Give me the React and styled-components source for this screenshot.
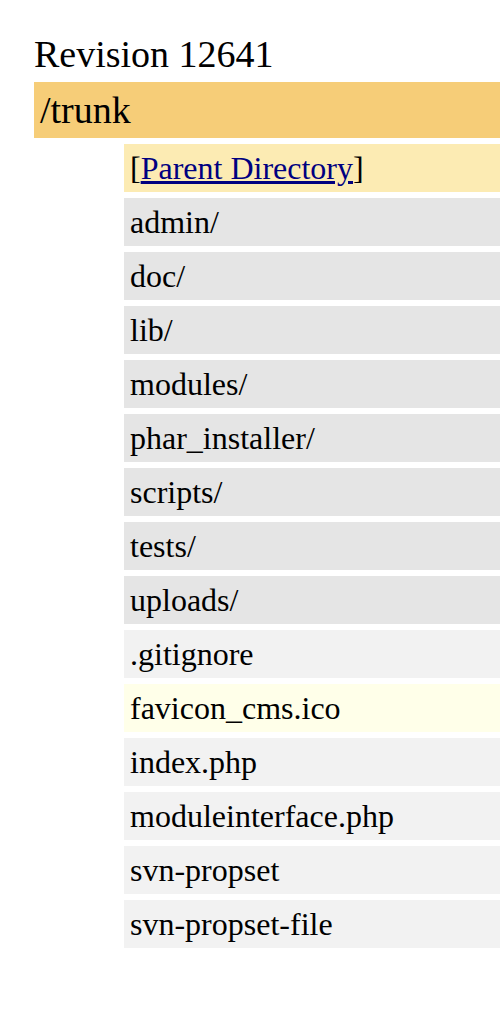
import React from "react";
import styled, { createGlobalStyle } from "styled-components";

const GlobalStyle = createGlobalStyle`
  html, body {
    margin: 0;
    padding: 0;
    background: #ffffff;
  }
  body {
    font-family: "Liberation Serif", "Times New Roman", serif;
    color: #000000;
  }
`;

const entries = [
  { name: "admin/", kind: "dir" },
  { name: "doc/", kind: "dir" },
  { name: "lib/", kind: "dir" },
  { name: "modules/", kind: "dir" },
  { name: "phar_installer/", kind: "dir" },
  { name: "scripts/", kind: "dir" },
  { name: "tests/", kind: "dir" },
  { name: "uploads/", kind: "dir" },
  { name: ".gitignore", kind: "file" },
  { name: "favicon_cms.ico", kind: "image" },
  { name: "index.php", kind: "file" },
  { name: "moduleinterface.php", kind: "file" },
  { name: "svn-propset", kind: "file" },
  { name: "svn-propset-file", kind: "file" },
];

const rowColors = {
  parent: "#fcebb3",
  dir: "#e5e5e5",
  file: "#f2f2f2",
  image: "#ffffe9",
};

const Page = styled.div`
  padding: 26px 0 40px 34px;
  display: flex;
  flex-direction: column;
`;

const Title = styled.h2`
  margin: 0;
  font-size: 38px;
  font-weight: normal;
  line-height: 56px;
  height: 56px;
`;

const PathBar = styled.div`
  background: #f6cd78;
  font-size: 38px;
  line-height: 56px;
  height: 56px;
  padding-left: 6px;
`;

const List = styled.ul`
  list-style: none;
  margin: 6px 0 0 90px;
  padding: 0;
  display: flex;
  flex-direction: column;
  gap: 6px;
`;

const Row = styled.li`
  background: ${(p) => rowColors[p.$kind]};
  font-size: 32px;
  line-height: 48px;
  height: 48px;
  padding-left: 6px;
  white-space: nowrap;
`;

const ParentLink = styled.a`
  color: #000080;
  text-decoration: underline;
`;

const App = () => {
  return (
    <>
      <GlobalStyle />
      <Page>
        <Title>Revision 12641</Title>
        <PathBar>/trunk</PathBar>
        <List>
          <Row $kind="parent">
            [<ParentLink href="#">Parent Directory</ParentLink>]
          </Row>
          {entries.map((entry) => (
            <Row key={entry.name} $kind={entry.kind}>
              {entry.name}
            </Row>
          ))}
        </List>
      </Page>
    </>
  );
};

export default App;
